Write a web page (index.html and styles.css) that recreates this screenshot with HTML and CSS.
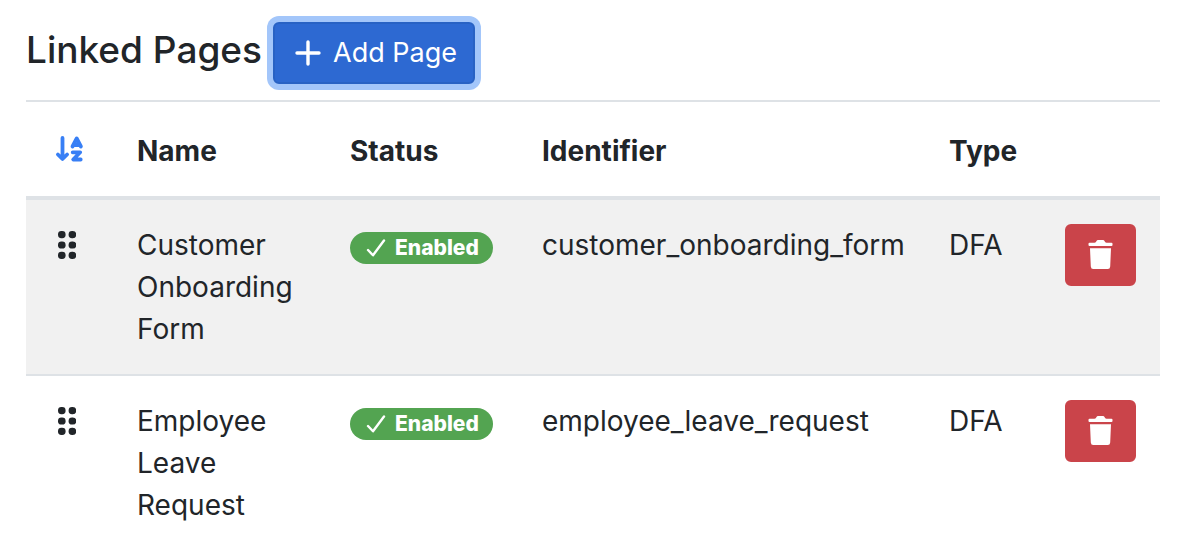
FILE: index.html
```html
<!DOCTYPE html>
<html lang="en">
<head>
    <meta charset="utf-8">
    <title>Linked Pages</title>
    <link rel="stylesheet" href="styles.css">
</head>
<body>
    <svg class="sprite" aria-hidden="true">
        <symbol id="icon-grip" viewBox="0 0 18 28">
            <rect x="0" y="0" width="7.600" height="7.200" rx="3.400" />
            <rect x="10.600" y="0" width="7.600" height="7.200" rx="3.400" />
            <rect x="0" y="10.400" width="7.600" height="7.200" rx="3.400" />
            <rect x="10.600" y="10.400" width="7.600" height="7.200" rx="3.400" />
            <rect x="0" y="20.800" width="7.600" height="7.200" rx="3.400" />
            <rect x="10.600" y="20.800" width="7.600" height="7.200" rx="3.400" />
        </symbol>
        <symbol id="icon-check" viewBox="0 0 20 18">
            <path d="M2 11l5 5.300L18 1.500" fill="none" stroke="currentColor" stroke-width="2.400" stroke-linecap="round" stroke-linejoin="round" />
        </symbol>
        <symbol id="icon-trash" viewBox="0 0 26 30">
            <path d="M1.500 2.700H6.500Q8 2.500 8.500 1Q9 0 10 0h5q1 0 1.500 1Q17 2.500 18.500 2.700h5Q24.500 2.700 24.500 3.700v1.300q0 1-1 1h-22q-1 0-1-1V3.700q0-1 1-1zM2 8.300h21L22.200 26.500q-.2 2.500-2.400 2.500H5.200q-2.200 0-2.400-2.500z" />
        </symbol>
    </svg>

    <div class="page-header">
        <h1>Linked Pages</h1>
        <button type="button" class="btn btn-primary" autofocus>
            <svg class="icon-plus" viewBox="0 0 26 26" aria-hidden="true">
                <path d="M13 2v22M2 13h22" fill="none" stroke="currentColor" stroke-width="3.400" stroke-linecap="round" />
            </svg>
            Add Page
        </button>
    </div>

    <table class="table">
        <colgroup>
            <col class="col-sort">
            <col class="col-name">
            <col class="col-status">
            <col>
            <col class="col-type">
            <col class="col-actions">
        </colgroup>
        <thead>
            <tr>
                <th>
                    <a href="#" class="sort-link" aria-label="Sort by name">
                        <svg class="icon-sort" viewBox="0 0 28 28" aria-hidden="true">
                            <g fill="none" stroke="currentColor" stroke-width="3.800" stroke-linecap="round" stroke-linejoin="round">
                                <path d="M6.500 3v20M1.900 19.500L6.500 24l4.600-4.500" />
                                <path d="M16.500 11.500L20.700 3.500l4.200 8M18.200 10h5" />
                                <path d="M16.700 17.300h7.500l-7 7.200H24.700" />
                            </g>
                        </svg>
                    </a>
                </th>
                <th>Name</th>
                <th>Status</th>
                <th>Identifier</th>
                <th>Type</th>
                <th></th>
            </tr>
        </thead>
        <tbody>
            <tr>
                <td class="handle"><svg class="icon-grip" aria-hidden="true"><use href="#icon-grip" /></svg></td>
                <td>Customer Onboarding Form</td>
                <td class="status"><span class="badge"><svg class="icon-check" aria-hidden="true"><use href="#icon-check" /></svg>Enabled</span></td>
                <td>customer_onboarding_form</td>
                <td>DFA</td>
                <td>
                    <button type="button" class="btn btn-danger" aria-label="Delete Customer Onboarding Form">
                        <svg class="icon-trash" aria-hidden="true"><use href="#icon-trash" /></svg>
                    </button>
                </td>
            </tr>
            <tr>
                <td class="handle"><svg class="icon-grip" aria-hidden="true"><use href="#icon-grip" /></svg></td>
                <td>Employee Leave Request</td>
                <td class="status"><span class="badge"><svg class="icon-check" aria-hidden="true"><use href="#icon-check" /></svg>Enabled</span></td>
                <td>employee_leave_request</td>
                <td>DFA</td>
                <td>
                    <button type="button" class="btn btn-danger" aria-label="Delete Employee Leave Request">
                        <svg class="icon-trash" aria-hidden="true"><use href="#icon-trash" /></svg>
                    </button>
                </td>
            </tr>
        </tbody>
    </table>
</body>
</html>
```

FILE: styles.css
```css
* { box-sizing: border-box; }
body { margin: 0; padding: 22px 28px 0 26px; background: #fff; color: #212529; font-family: Inter, "Liberation Sans", sans-serif; font-size: 28px; line-height: 42px; }
svg { fill: currentColor; flex: none; overflow: visible; }
.sprite { display: none; }

.page-header { display: flex; align-items: flex-start; gap: 11px; margin-bottom: 16px; }
h1 { margin: 0; font-size: 37px; font-weight: 500; line-height: 56px; white-space: nowrap; }

.btn { display: flex; align-items: center; justify-content: center; height: 62px; border: 2px solid transparent; border-radius: 6px; color: #fff; font: inherit; white-space: nowrap; cursor: pointer; }
.btn-primary { gap: 12px; padding: 0 16px 0 20px; background: #2d69d2; border-color: #2862c4; box-shadow: 0 0 0 6px #a3c6fa; font-size: 27px; outline: none; }
.btn-danger { width: 71px; padding: 0; background: #ca444a; border-color: #ca444a; }

.table { width: 100%; table-layout: fixed; border-collapse: separate; border-spacing: 0; }
.col-sort { width: 87px; }
.col-name { width: 213px; }
.col-status { width: 192px; }
.col-type { width: 116px; }
.col-actions { width: 119px; }
th, td { padding: 24px; text-align: left; vertical-align: top; border-top: 2px solid #dee2e6; }
th { padding-top: 28px; font-weight: 700; border-bottom: 4px solid #dee2e6; }
tbody tr:first-child td { border-top: 0; background: #f1f1f1; }
th:last-child, td:last-child { padding-right: 0; }

.sort-link { display: flex; align-items: center; height: 38px; margin-left: 6px; color: #387ff5; }
.icon-sort { width: 28px; height: 28px; }
.icon-plus { width: 26px; height: 26px; }
.icon-grip { display: block; width: 18px; height: 28px; }
.icon-check { width: 20px; height: 18px; }
.icon-trash { width: 26px; height: 30px; }
.handle { padding-top: 31px; padding-left: 32px; }
.status { padding-top: 32px; }

.badge { display: flex; align-items: center; gap: 9px; width: 143px; height: 32px; padding-left: 16px; border-radius: 16px; background: #53a451; color: #fff; font-size: 21px; font-weight: 800; line-height: 32px; }
```
